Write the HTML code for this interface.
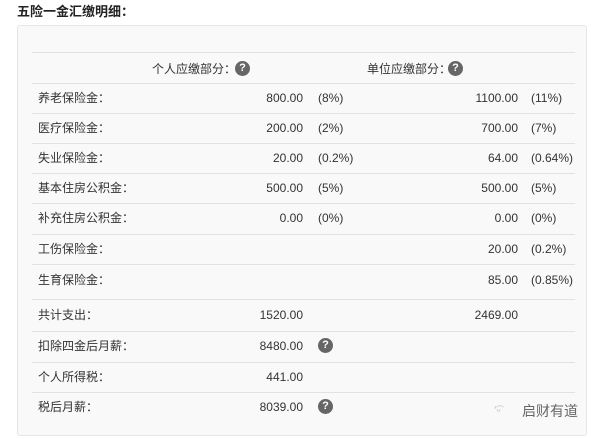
<!DOCTYPE html><html><head><meta charset="utf-8"><style>
body{margin:0;width:600px;height:439px;background:#fff;font-family:"Liberation Sans","Noto Sans CJK SC",sans-serif;color:#333;font-size:12px;position:relative;overflow:hidden}
.t{position:absolute;white-space:nowrap;line-height:14px}
.c{font-family:"Noto Sans CJK SC",sans-serif;line-height:14px}
.r{text-align:right}
.panel{position:absolute;left:17px;top:25px;width:568px;height:409px;background:#f9f9f9;border:1px solid #e6e6e6;border-radius:3px}
.ln{position:absolute;left:32px;width:543px;height:1px;background:#e2e2e2}
.q{position:absolute;width:15px;height:15px;border-radius:50%;background:#666;color:#fff;font-size:11px;font-weight:bold;text-align:center;line-height:15px}
</style></head><body>
<div class="t c" style="left:17px;top:4px;font-weight:bold;font-size:13px;color:#222">五险一金汇缴明细：</div>
<div class="panel"></div>
<div class="ln" style="top:52px"></div><div class="ln" style="top:83px"></div><div class="ln" style="top:113px"></div><div class="ln" style="top:143px"></div><div class="ln" style="top:173px"></div><div class="ln" style="top:203px"></div><div class="ln" style="top:234px"></div><div class="ln" style="top:264px"></div><div class="ln" style="top:299px"></div><div class="ln" style="top:331px"></div><div class="ln" style="top:362px"></div><div class="ln" style="top:392px"></div>
<div class="t c" style="left:152px;top:62px">个人应缴部分：</div><div class="q" style="left:235px;top:61px">?</div>
<div class="t c" style="left:367px;top:62px">单位应缴部分：</div><div class="q" style="left:448px;top:61px">?</div>
<div class="t c" style="left:38px;top:91px">养老保险金：</div><div class="t r" style="left:200px;width:103px;top:91px">800.00</div><div class="t" style="left:318px;top:91px">(8%)</div><div class="t r" style="left:420px;width:98px;top:91px">1100.00</div><div class="t" style="left:531px;top:91px">(11%)</div>
<div class="t c" style="left:38px;top:121px">医疗保险金：</div><div class="t r" style="left:200px;width:103px;top:121px">200.00</div><div class="t" style="left:318px;top:121px">(2%)</div><div class="t r" style="left:420px;width:98px;top:121px">700.00</div><div class="t" style="left:531px;top:121px">(7%)</div>
<div class="t c" style="left:38px;top:151px">失业保险金：</div><div class="t r" style="left:200px;width:103px;top:151px">20.00</div><div class="t" style="left:318px;top:151px">(0.2%)</div><div class="t r" style="left:420px;width:98px;top:151px">64.00</div><div class="t" style="left:531px;top:151px">(0.64%)</div>
<div class="t c" style="left:38px;top:181px">基本住房公积金：</div><div class="t r" style="left:200px;width:103px;top:181px">500.00</div><div class="t" style="left:318px;top:181px">(5%)</div><div class="t r" style="left:420px;width:98px;top:181px">500.00</div><div class="t" style="left:531px;top:181px">(5%)</div>
<div class="t c" style="left:38px;top:211px">补充住房公积金：</div><div class="t r" style="left:200px;width:103px;top:211px">0.00</div><div class="t" style="left:318px;top:211px">(0%)</div><div class="t r" style="left:420px;width:98px;top:211px">0.00</div><div class="t" style="left:531px;top:211px">(0%)</div>
<div class="t c" style="left:38px;top:242px">工伤保险金：</div><div class="t r" style="left:420px;width:98px;top:242px">20.00</div><div class="t" style="left:531px;top:242px">(0.2%)</div>
<div class="t c" style="left:38px;top:273px">生育保险金：</div><div class="t r" style="left:420px;width:98px;top:273px">85.00</div><div class="t" style="left:531px;top:273px">(0.85%)</div>
<div class="t c" style="left:38px;top:308px">共计支出：</div><div class="t r" style="left:200px;width:103px;top:308px">1520.00</div><div class="t r" style="left:420px;width:98px;top:308px">2469.00</div>
<div class="t c" style="left:38px;top:339px">扣除四金后月薪：</div><div class="t r" style="left:200px;width:103px;top:339px">8480.00</div><div class="q" style="left:318px;top:338px">?</div>
<div class="t c" style="left:38px;top:370px">个人所得税：</div><div class="t r" style="left:200px;width:103px;top:370px">441.00</div>
<div class="t c" style="left:38px;top:400px">税后月薪：</div><div class="t r" style="left:200px;width:103px;top:400px">8039.00</div><div class="q" style="left:318px;top:399px">?</div>
<div class="t" style="left:494px;top:404px;color:#bbb;font-size:11px">ʻ͡ᵕ</div>
<div class="t c" style="left:522px;top:403px;color:#666;font-size:14px;line-height:16px">启财有道</div>
</body></html>
